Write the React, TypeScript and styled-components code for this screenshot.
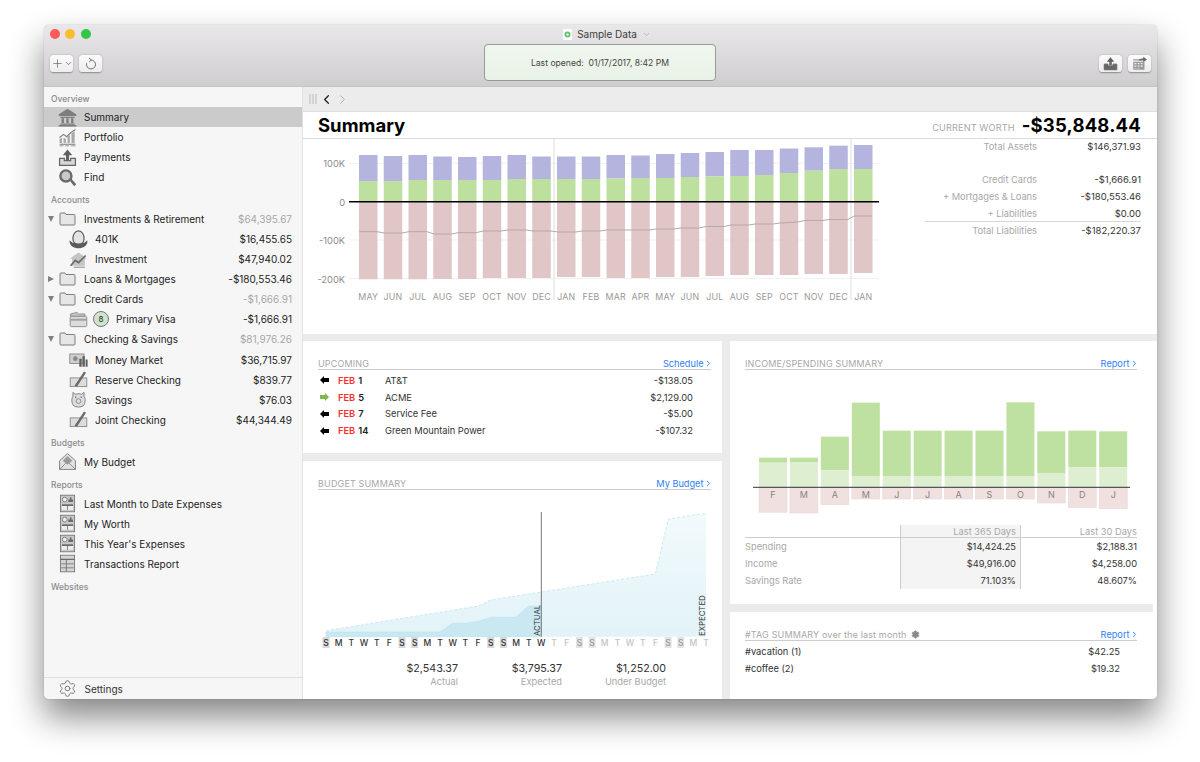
import { ReactNode } from 'react'
import styled, { createGlobalStyle } from 'styled-components'
import { ChevronDown, ChevronLeft, ChevronRight, Plus, Settings } from 'lucide-react'

const GlobalStyle = createGlobalStyle`
    html, body {
        margin: 0;
        height: 100%;
        overflow: hidden;
        background: #fff;
    }
    body {
        font-family: Inter, "Liberation Sans", sans-serif;
        font-size: 10px;
        color: #222;
        -webkit-font-smoothing: antialiased;
    }
    svg text {
        font-family: Inter, "Liberation Sans", sans-serif;
    }
`

const Page = styled.div`
    padding: 25px 43px 0 44px;
`

const Window = styled.div`
    width: 1113px;
    height: 674px;
    display: flex;
    flex-direction: column;
    border-radius: 5px;
    overflow: hidden;
    background: #fff;
    box-shadow: 0 0 1px rgba(0, 0, 0, 0.45), 0 18px 34px rgba(0, 0, 0, 0.48);
`

const TitleBar = styled.header`
    height: 62px;
    flex: none;
    display: flex;
    flex-direction: column;
    background: linear-gradient(#e9e7e9, #cfcdcf);
    border-bottom: 1px solid #c4c4c4;
    box-sizing: border-box;
`

const TitleRow = styled.div`
    height: 18px;
    flex: none;
    display: grid;
    grid-template-columns: 1fr auto 1fr;
    align-items: center;
    padding: 0 5.5px;
`

const Lights = styled.div`
    display: flex;
    gap: 5.5px;
`

const Light = styled.span<{ $color: string }>`
    width: 10px;
    height: 10px;
    border-radius: 50%;
    background: ${(p) => p.$color};
`

const DocTitle = styled.div`
    display: flex;
    align-items: center;
    gap: 5px;
    color: #3c3c3c;
    font-size: 10px;
    margin-left: 13px;
`

const ToolRow = styled.div`
    display: grid;
    grid-template-columns: 1fr 232px 1fr;
    padding: 1px 7px 0 6px;
    height: 37px;
    align-items: center;
`

const ToolGroup = styled.div<{ $end?: boolean }>`
    display: flex;
    gap: 6px;
    justify-content: ${(p) => (p.$end ? 'flex-end' : 'flex-start')};
    margin: 2px ${(p) => (p.$end ? -1 : 0)}px 0 0;
`

const ToolButton = styled.div`
    width: 23px;
    height: 17px;
    display: flex;
    align-items: center;
    justify-content: center;
    border-radius: 3.5px;
    background: linear-gradient(#fbfbfb, #eeeeee);
    box-shadow: 0 0.5px 1.5px rgba(0, 0, 0, 0.35);
    color: #666;
`

const StatusBox = styled.div`
    height: 37px;
    display: flex;
    align-items: center;
    justify-content: center;
    box-sizing: border-box;
    border: 1px solid #969b95;
    border-radius: 4px;
    background: linear-gradient(#f1f7ef, #e9f2e6);
    color: #444;
    font-size: 8.6px;
    white-space: pre;
`

const Body = styled.div`
    flex: 1;
    min-height: 0;
    display: flex;
`

const Sidebar = styled.aside`
    width: 259px;
    flex: none;
    display: flex;
    flex-direction: column;
    box-sizing: border-box;
    background: #f6f6f6;
    border-right: 1px solid #e2e2e2;
`

const SideList = styled.div`
    flex: 1;
`

const SectionLabel = styled.div<{ $first?: boolean }>`
    height: ${(p) => (p.$first ? 20 : 22)}px;
    box-sizing: border-box;
    padding: ${(p) => (p.$first ? 7 : 8)}px 0 0 7px;
    color: #8b8b8b;
    font-size: 8.5px;
    font-weight: 500;
`

const Row = styled.div<{ $indent: number; $active?: boolean }>`
    height: 20.05px;
    display: flex;
    align-items: center;
    padding: 0 10px 0 ${(p) => p.$indent}px;
    background: ${(p) => (p.$active ? '#cbcbcb' : 'transparent')};
    white-space: nowrap;
`

const Caret = styled.span<{ $open: boolean }>`
    width: 11px;
    flex: none;
    display: flex;
    &::before {
        content: '';
        border-style: solid;
        border-color: transparent;
        ${(p) =>
            p.$open
                ? 'border-width: 6px 3.5px 0; border-top-color: #808080;'
                : 'border-width: 3.5px 0 3.5px 6px; border-left-color: #808080;'}
    }
`

const IconSlot = styled.span<{ $width?: number }>`
    width: ${(p) => p.$width ?? 26}px;
    flex: none;
    display: flex;
    align-items: center;
`

const Amount = styled.span<{ $muted?: boolean }>`
    margin-left: auto;
    color: ${(p) => (p.$muted ? '#a6a6a6' : '#222')};
`

const Badge = styled.span`
    width: 14px;
    height: 14px;
    margin-right: 7px;
    flex: none;
    display: flex;
    align-items: center;
    justify-content: center;
    border: 1px solid #777;
    border-radius: 50%;
    background: #cfe3cf;
    font-size: 8px;
`

const SettingsRow = styled.div`
    height: 22px;
    flex: none;
    box-sizing: border-box;
    display: flex;
    align-items: center;
    gap: 8px;
    padding-left: 13.5px;
    border-top: 1px solid #dfdfdf;
    color: #6c6c6c;
    span {
        color: #333;
    }
`

const Main = styled.main`
    flex: 1;
    min-width: 0;
    display: flex;
    flex-direction: column;
`

const NavStrip = styled.div`
    height: 25px;
    flex: none;
    box-sizing: border-box;
    display: flex;
    align-items: center;
    gap: 1px;
    padding-left: 6px;
    background: #ececec;
    border-bottom: 1px solid #dedede;
`

const HeaderBar = styled.div`
    height: 27px;
    flex: none;
    box-sizing: border-box;
    display: flex;
    align-items: center;
    padding: 0 16px 0 15px;
    border-bottom: 1px solid #dcdcdc;
`

const PageTitle = styled.h1`
    margin: 0 auto 0 0;
    font-size: 18.5px;
    font-weight: 700;
    color: #000;
`

const WorthLabel = styled.span`
    margin: 4px 7px 0 0;
    font-size: 9.2px;
    letter-spacing: 0.1px;
    color: #a8a8a8;
`

const WorthValue = styled.span`
    font-size: 18.5px;
    font-weight: 700;
    color: #000;
    letter-spacing: 0.2px;
`

const ChartPanel = styled.section`
    height: 195px;
    flex: none;
    display: flex;
`

const ChartSvg = styled.svg`
    display: block;
    flex: none;
`

const Totals = styled.div`
    flex: 1;
    padding: 0 16px 0 9px;
    font-size: 9.5px;
`

const TotalRow = styled.div<{ $gap?: number; $rule?: boolean }>`
    display: grid;
    grid-template-columns: 112px 1fr;
    height: ${(p) => (p.$gap === undefined ? 17 : 15)}px;
    align-items: center;
    margin-bottom: ${(p) => p.$gap ?? 0}px;
    border-bottom: ${(p) => (p.$rule ? '1px solid #d8d8d8' : 'none')};
    box-sizing: border-box;
    span:first-child {
        text-align: right;
        color: #a8a8a8;
        font-size: 9.3px;
    }
    span:last-child {
        text-align: right;
        color: #333;
    }
`

const Dashboard = styled.div`
    flex: 1;
    min-height: 0;
    display: grid;
    grid-template-columns: 419px 1fr;
    column-gap: 8px;
    padding-top: 7px;
    background: #ebebeb;
    font-size: 9.3px;
`

const Column = styled.div<{ $rows: string; $inset?: boolean }>`
    display: grid;
    grid-template-rows: ${(p) => p.$rows};
    row-gap: 8px;
    min-height: 0;
    min-width: 0;
    border-right: ${(p) => (p.$inset ? '4px solid #fff' : 'none')};
`

const Panel = styled.section<{ $right?: number }>`
    background: #fff;
    padding: 17px ${(p) => p.$right ?? 11}px 0 15px;
    min-height: 0;
    min-width: 0;
`

const PanelHeader = styled.div<{ $tight?: boolean }>`
    height: 12px;
    box-sizing: border-box;
    display: flex;
    justify-content: space-between;
    align-items: center;
    border-bottom: 1px solid #cdcdcd;
    margin-bottom: ${(p) => (p.$tight ? 0 : 2)}px;
`

const PanelTitle = styled.span`
    font-size: 9px;
    letter-spacing: 0.15px;
    color: #a8a8a8;
    display: flex;
    align-items: center;
    gap: 4px;
    white-space: pre;
`

const PanelLink = styled.span`
    font-size: 9.2px;
    color: #2e7ff5;
    display: flex;
    align-items: center;
    gap: 0;
    margin-right: -1.5px;
`

const UpcomingRow = styled.div`
    height: 16.8px;
    display: grid;
    grid-template-columns: 20px 47px 1fr 90px 18px;
    align-items: center;
    color: #333;
    > svg {
        margin-left: 2px;
    }
`

const DateCell = styled.span`
    font-weight: 600;
    color: #222;
    b {
        color: #fb2d2d;
        font-weight: 600;
        margin-right: 3px;
    }
`

const AmountCell = styled.span`
    text-align: right;
`

const BudgetStats = styled.div`
    display: grid;
    grid-template-columns: repeat(3, 104px);
    padding-left: 36px;
    margin-top: 9px;
`

const Stat = styled.div`
    text-align: right;
    strong {
        display: block;
        font-size: 10.7px;
        line-height: 15px;
        font-weight: 400;
        color: #333;
    }
    span {
        display: block;
        line-height: 12px;
        color: #a8a8a8;
    }
`

const IncomeTable = styled.div`
    display: grid;
    grid-template-columns: 155px 121px 1fr;
    margin-top: 5px;
`

const Cell = styled.div<{ $head?: boolean; $band?: boolean; $label?: boolean }>`
    height: ${(p) => (p.$head ? 13 : 17)}px;
    line-height: ${(p) => (p.$head ? 13 : 17)}px;
    box-sizing: border-box;
    text-align: ${(p) => (p.$label ? 'left' : 'right')};
    color: ${(p) => (p.$head || p.$label ? '#a8a8a8' : '#333')};
    padding-right: ${(p) => (p.$band ? 4 : 0)}px;
    background: ${(p) => (p.$band ? '#f4f4f4' : 'transparent')};
    border-left: ${(p) => (p.$band ? '1px solid #ccc' : 'none')};
    border-right: ${(p) => (p.$band ? '1px solid #ccc' : 'none')};
    border-bottom: ${(p) => (p.$head ? '1px solid #cdcdcd' : 'none')};
`

const TagRow = styled.div`
    height: 17px;
    display: flex;
    justify-content: space-between;
    align-items: center;
    padding-right: 17px;
    color: #333;
`

const GRAY = '#7d7d7d'

const Glyph = ({ size = 19, children }: { size?: number; children: ReactNode }) => (
    <svg width={size} height={size} viewBox="0 0 24 24" fill={GRAY} stroke="none">
        {children}
    </svg>
)

const BankIcon = () => (
    <Glyph>
        <path d="M12 1 23 8v2H1V8z" />
        <path d="M3 11h18v1.5H3z" />
        <path d="M4.5 13h3v6h-3zM10.500 13h3v6h-3zM16.500 13h3v6h-3z" />
        <path d="M3 19.500h18V21H3zM1 21.500h22V23.500H1z" />
    </Glyph>
)

const PortfolioIcon = () => (
    <Glyph>
        <path d="M2 19V14l3-2v7zM7 19v-7l3 2v5zM12 19v-8l3-2v10zM17 19V7l4-3v15z" fill="#a8a8a8" />
        <path d="M2 12l5-4 4 3 5-5 6-4" fill="none" stroke={GRAY} strokeWidth="1.4" />
        <path d="M2 20h20v1H2zM2 22h5v1H2zM9 22h5v1H9zM16 22h6v1h-6z" />
    </Glyph>
)

const TrayIcon = ({ size = 19, fill = '#d8d8d8' }: { size?: number; fill?: string }) => (
    <Glyph size={size}>
        <path d="M12 2 18 9h-4v6h-4V9H6z" fill="#5f5f5f" />
        <path d="M2 13h6v3h8v-3h6v9H2z" fill={fill} stroke="#666" strokeWidth="1.6" />
    </Glyph>
)

const FindIcon = () => (
    <Glyph>
        <circle cx="10" cy="10" r="7" fill="#c9c9c9" stroke="#6a6a6a" strokeWidth="3" />
        <path d="M15 16l2-2 6 6.500-2.500 2.500z" fill="#666" />
    </Glyph>
)

const FolderIcon = () => (
    <svg width="17" height="14" viewBox="0 0 17 14">
        <path
            d="M1 3V2a1 1 0 0 1 1-1h4l1 1.500h8a1 1 0 0 1 1 1V12a1 1 0 0 1-1 1H2a1 1 0 0 1-1-1z"
            fill="#e6e6e6"
            stroke={GRAY}
        />
    </svg>
)

const EggIcon = () => (
    <Glyph>
        <path d="M12 1c4.500 0 7 5 7 10s-3.500 7-7 7-7-2-7-7 2.500-10 7-10z" fill="#e4e4e4" stroke="#5f5f5f" strokeWidth="1.6" />
        <path d="M1 13c1.500 2 3 3 5 3.500 4 1.500 8 1.500 12 0 2-.5 3.500-1.500 5-3.500 1.500 5.500-4.500 10-11 10S-.5 18.500 1 13z" fill="#5a5a5a" />
    </Glyph>
)

const HouseChartIcon = () => (
    <Glyph>
        <path d="M12 3 23 11h-3v9H4v-9H1z" fill="#c4c4c4" />
        <path d="M2 20l6-7 4 3 9-9" fill="none" stroke="#666" strokeWidth="2" />
        <path d="M6 21h14v1.500H6z" fill="#999" />
    </Glyph>
)

const CardsIcon = () => (
    <Glyph>
        <path d="M2 8V5l8-2 2 2h8v3z" fill="#c6c6c6" stroke={GRAY} />
        <rect x="1.500" y="8" width="21" height="13" rx="1.500" fill="#dcdcdc" stroke={GRAY} />
        <path d="M2 11h20v2.500H2z" fill="#a0a0a0" />
    </Glyph>
)

const MoneyIcon = () => (
    <Glyph>
        <rect x="1" y="5" width="18" height="12" fill="#cfcfcf" stroke={GRAY} />
        <circle cx="8" cy="11" r="3" fill="#8a8a8a" />
        <path d="M13 11h3v10h-3zM17 8h3v13h-3zM21 12h2.500v9H21z" fill="#5f5f5f" />
    </Glyph>
)

const CheckIcon = () => (
    <Glyph>
        <rect x="1.500" y="10" width="21" height="11" fill="#dcdcdc" stroke={GRAY} />
        <path d="M7 20 19 2l2.500 1.500L10 21z" fill="#6a6a6a" />
    </Glyph>
)

const PiggyIcon = () => (
    <Glyph>
        <path d="M5 3l3 2.500c3-1 6-1 8 0L19 3v5c2 2 2 9-1 12-3 2-9 2-12 0-3-3-3-10-1-12z" fill="#dcdcdc" stroke={GRAY} strokeWidth="1.2" />
        <circle cx="12" cy="14" r="3" fill="none" stroke={GRAY} />
        <circle cx="8.500" cy="9" r="1" />
        <circle cx="15.500" cy="9" r="1" />
    </Glyph>
)

const EnvelopeIcon = () => (
    <Glyph>
        <path d="M2 11 12 2l10 9v11H2z" fill="#e2e2e2" stroke={GRAY} strokeWidth="1.200" />
        <path d="M6 11l6-6 6 6-6 5z" fill="#9a9a9a" />
        <path d="M2 22l8-8M22 22l-8-8" stroke={GRAY} fill="none" />
    </Glyph>
)

const ReportIcon = () => (
    <Glyph>
        <rect x="3" y="1.500" width="18" height="21" fill="#c8c8c8" stroke="#6a6a6a" />
        <circle cx="8.500" cy="7" r="3" fill="#eee" stroke="#6a6a6a" />
        <path d="M13 10V7h2V4h2v3h2v3z" fill="#6a6a6a" />
        <path d="M5 13h14v7H5z" fill="#eee" />
        <path d="M5 13h14v2H5zM11.500 15h1v5h-1z" fill="#6a6a6a" />
    </Glyph>
)

const TableIcon = () => (
    <Glyph>
        <rect x="3" y="1.500" width="18" height="21" fill="#d4d4d4" stroke="#6a6a6a" />
        <path d="M3 6h18v1.500H3zM10 7h1v15h-1zM4 12h16v1H4zM4 17h16v1H4z" fill="#6a6a6a" />
    </Glyph>
)

const LeftArrow = () => (
    <svg width="9" height="8" viewBox="0 0 9 8">
        <path d="M0 4 4 0v2h5v4H4v2z" fill="#000" />
    </svg>
)

const RightArrow = () => (
    <svg width="9" height="8" viewBox="0 0 9 8">
        <path d="M9 4 5 0v2H0v4h5v2z" fill="#7db84c" />
    </svg>
)

const RefreshIcon = () => (
    <svg width="12" height="13" viewBox="0 0 12 13" fill="none" stroke="#707070" strokeWidth="1">
        <path d="M6 3a4.500 4.500 0 1 1-4.300 3.200" />
        <path d="M4 0.800 6.300 3 4 5.200" />
    </svg>
)

const ExportIcon = () => (
    <Glyph size={15}>
        <path d="M2 5h12v2H2zM2 9h18v13H2z" fill="#9a9a9a" />
        <path d="M4 11h3v2H4zM9 11h3v2H9zM14 11h3v2h-3zM4 15h3v2H4zM9 15h3v2H9zM14 15h3v2h-3zM4 19h3v1H4zM9 19h3v1H9z" fill="#eee" />
        <path d="M10 7c3-3 6-3 8-3V1l6 4.500-6 4.500V7c-3 0-5 0-8 0z" fill="#666" />
    </Glyph>
)

const DocIcon = () => (
    <svg width="9" height="11" viewBox="0 0 9 11">
        <rect width="9" height="11" fill="#fdfdfd" />
        <circle cx="4.500" cy="5.500" r="3" fill="#5fc46a" />
        <circle cx="4.500" cy="5.500" r="1.200" fill="#e8f8e8" />
    </svg>
)

const GripIcon = () => (
    <svg width="9" height="10" viewBox="0 0 9 10" stroke="#bbb">
        <path d="M1 0v10M4 0v10M7 0v10" />
    </svg>
)

type BarRow = [string, number, number, number]

const WORTH: BarRow[] = [
    ['MAY', 155, 181, 279.3],
    ['JUN', 156, 181, 279.3],
    ['JUL', 155, 180, 279.3],
    ['AUG', 156.5, 180, 279],
    ['SEP', 157, 180, 279],
    ['OCT', 156, 180, 278],
    ['NOV', 155, 179, 278],
    ['DEC', 156.5, 179, 278],
    ['JAN', 156.5, 179, 277],
    ['FEB', 156.5, 179, 277],
    ['MAR', 155, 178.5, 278],
    ['APR', 155.5, 178, 278],
    ['MAY', 154, 178, 277],
    ['JUN', 153, 177, 277],
    ['JUL', 152, 176.5, 276],
    ['AUG', 150, 176, 275],
    ['SEP', 150, 175, 275],
    ['OCT', 148.5, 173, 275],
    ['NOV', 147.3, 170.7, 274],
    ['DEC', 145.7, 169, 274],
    ['JAN', 145, 169, 273],
]

const WORTH_LINE = [
    [359, 231.7], [377, 231.7], [384, 233], [402, 233], [409, 231.7], [427, 231.7], [434, 234], [452, 234],
    [458, 232.7], [476, 232.7], [483, 231], [501, 231], [508, 230], [526, 230], [533, 231], [551, 231],
    [558, 232], [576, 232], [582, 231], [600, 231], [607, 230], [625, 230], [632, 230], [650, 230],
    [656, 229], [674, 229], [681, 228], [699, 228], [706, 226.500], [724, 226.500], [731, 225], [749, 225],
    [755, 224], [773, 224], [780, 223], [798, 222], [805, 220.500], [823, 220.500], [829, 219.500], [848, 219.500],
    [854, 216], [872, 216],
]

const WorthChart = () => (
    <ChartSvg width={613} height={195} viewBox="303 139 613 195">
        {[163.5, 240, 278.5].map((y) => (
            <line key={y} x1={349} x2={879} y1={y} y2={y} stroke="#f1f1f1" />
        ))}
        {[
            ['100K', 167],
            ['0', 205.500],
            ['-100K', 244],
            ['-200K', 282.500],
        ].map(([label, y]) => (
            <text key={label} x={345} y={y} textAnchor="end" fontSize={9.3} fill="#8c8c8c">
                {label}
            </text>
        ))}
        {[554, 851].map((x) => (
            <line key={x} x1={x} x2={x} y1={139} y2={300} stroke="#dedede" />
        ))}
        {WORTH.map(([month, top, mid, bottom], i) => {
            const x = 359 + i * 24.75
            return (
                <g key={i}>
                    <rect x={x} y={top} width={18.5} height={mid - top} fill="#b4b4de" />
                    <rect x={x} y={mid} width={18.5} height={201.700 - mid} fill="#bde09f" />
                    <rect x={x} y={201.700} width={18.5} height={bottom - 201.700} fill="#e0c6c6" />
                    <text x={x + 9.25} y={299.500} textAnchor="middle" fontSize={8.8} letterSpacing={0.2} fill="#999">
                        {month}
                    </text>
                </g>
            )
        })}
        <polyline points={WORTH_LINE.map((p) => p.join(',')).join(' ')} fill="none" stroke="#b5a8a8" />
        <line x1={349} x2={879} y1={201.700} y2={201.700} stroke="#000" strokeWidth={1.6} />
    </ChartSvg>
)

const DAYS = 'SMTWTFSSMTWTFSSMTWTFSSMTWTFSSMT'.split('')

const BudgetChart = () => (
    <ChartSvg width={393} height={162} viewBox="318 490 393 162">
        <defs>
            <linearGradient id="expectedFill" x1="0" y1="0" x2="0" y2="1">
                <stop offset="0" stopColor="#f2fafc" />
                <stop offset="1" stopColor="#e2f3f8" />
            </linearGradient>
        </defs>
        <path d="M326 630.700 478.300 606 490.700 600 655.300 574 668.300 519.300 706 513.300V636.700H326Z" fill="url(#expectedFill)" />
        <path
            d="M326 630.700 478.300 606 490.700 600 655.300 574 668.300 519.300 706 513.300"
            fill="none"
            stroke="#cde9f3"
            strokeDasharray="3 2"
        />
        <path
            d="M326 632H440L452.300 623.300H465.700L478 621.300 490.700 617.300H515.700L528.700 606H541.300V636.700H326Z"
            fill="#c9e8f2"
            stroke="#b6e0ee"
            strokeWidth={0.5}
        />
        <line x1={541.300} x2={541.300} y1={512} y2={636.700} stroke="#777" />
        <text transform="translate(539.500 636) rotate(-90)" fontSize={7.8} fill="#333">
            ACTUAL
        </text>
        <text transform="translate(704.500 636) rotate(-90)" fontSize={7.8} fill="#333">
            EXPECTED
        </text>
        {DAYS.map((d, i) => {
            const x = 326 + i * 12.67
            const weekend = d === 'S'
            return (
                <g key={i}>
                    {weekend && <rect x={x - 3.5} y={637} width={7} height={11} fill={i < 18 ? '#d8d8d8' : '#e4e4e4'} />}
                    <text
                        x={x}
                        y={645.500}
                        textAnchor="middle"
                        fontSize={8.5}
                        fontWeight={500}
                        fill={i < 18 ? '#333' : weekend ? '#999' : '#c4c4c4'}
                    >
                        {d}
                    </text>
                </g>
            )
        })}
    </ChartSvg>
)

const INCOME: [string, number, number, number][] = [
    ['F', 338, 353, 502],
    ['M', 338, 351, 504],
    ['A', 275, 376, 479],
    ['M', 173, 393, 462],
    ['J', 257, 393, 462],
    ['J', 257, 393, 462],
    ['A', 257, 393, 462],
    ['S', 257, 393, 462],
    ['O', 172, 393, 462],
    ['N', 259, 384, 474],
    ['D', 257, 367, 488],
    ['J', 259, 367, 491],
]

const IncomeChart = () => (
    <ChartSvg width={392} height={150} viewBox="745 370 392 150">
        {INCOME.map(([label, top, light, bottom], i) => {
            const x = 759 + i * 30.93
            const y = (z: number) => 345 + z / 3
            return (
                <g key={i}>
                    <rect x={x} y={y(top)} width={28} height={y(light) - y(top)} fill="#bee0a0" />
                    <rect x={x} y={y(light)} width={28} height={y(427) - y(light)} fill="#deeed0" />
                    <rect x={x} y={y(427)} width={28} height={y(bottom) - y(427)} fill="#f0e0e0" stroke="#e8d4d4" strokeWidth={0.5} />
                    <text x={x + 14} y={498} textAnchor="middle" fontSize={9} fill="#8a8080">
                        {label}
                    </text>
                </g>
            )
        })}
        <line x1={753} x2={1130} y1={487.300} y2={487.300} stroke="#333" />
    </ChartSvg>
)

const MoreLink = ({ label }: { label: string }) => (
    <PanelLink>
        {label}
        <ChevronRight size={9} strokeWidth={2.5} />
    </PanelLink>
)

const UPCOMING = [
    { out: true, day: 'FEB', num: '1', name: 'AT&T', amount: '-$138.05' },
    { out: false, day: 'FEB', num: '5', name: 'ACME', amount: '$2,129.00' },
    { out: true, day: 'FEB', num: '7', name: 'Service Fee', amount: '-$5.00' },
    { out: true, day: 'FEB', num: '14', name: 'Green Mountain Power', amount: '-$107.32' },
]

export default function App() {
    return (
        <Page>
            <GlobalStyle />
            <Window>
                <TitleBar>
                    <TitleRow>
                        <Lights>
                            <Light $color="#fc5b57" />
                            <Light $color="#fdbb2e" />
                            <Light $color="#33c748" />
                        </Lights>
                        <DocTitle>
                            <DocIcon />
                            Sample Data
                            <ChevronDown size={9} color="#aaa" />
                        </DocTitle>
                    </TitleRow>
                    <ToolRow>
                        <ToolGroup>
                            <ToolButton>
                                <Plus size={13} strokeWidth={1.3} />
                                <ChevronDown size={9} strokeWidth={2} />
                            </ToolButton>
                            <ToolButton>
                                <RefreshIcon />
                            </ToolButton>
                        </ToolGroup>
                        <StatusBox>Last opened:  01/17/2017, 8:42 PM</StatusBox>
                        <ToolGroup $end>
                            <ToolButton>
                                <TrayIcon size={15} fill="#666" />
                            </ToolButton>
                            <ToolButton>
                                <ExportIcon />
                            </ToolButton>
                        </ToolGroup>
                    </ToolRow>
                </TitleBar>
                <Body>
                    <Sidebar>
                        <SideList>
                            <SectionLabel $first>Overview</SectionLabel>
                            <Row $indent={14} $active>
                                <IconSlot><BankIcon /></IconSlot>
                                Summary
                            </Row>
                            <Row $indent={14}>
                                <IconSlot><PortfolioIcon /></IconSlot>
                                Portfolio
                            </Row>
                            <Row $indent={14}>
                                <IconSlot><TrayIcon /></IconSlot>
                                Payments
                            </Row>
                            <Row $indent={14}>
                                <IconSlot><FindIcon /></IconSlot>
                                Find
                            </Row>
                            <SectionLabel>Accounts</SectionLabel>
                            <Row $indent={4}>
                                <Caret $open />
                                <IconSlot $width={25}><FolderIcon /></IconSlot>
                                Investments &amp; Retirement
                                <Amount $muted>$64,395.67</Amount>
                            </Row>
                            <Row $indent={25}>
                                <IconSlot><EggIcon /></IconSlot>
                                401K
                                <Amount>$16,455.65</Amount>
                            </Row>
                            <Row $indent={25}>
                                <IconSlot><HouseChartIcon /></IconSlot>
                                Investment
                                <Amount>$47,940.02</Amount>
                            </Row>
                            <Row $indent={4}>
                                <Caret $open={false} />
                                <IconSlot $width={25}><FolderIcon /></IconSlot>
                                Loans &amp; Mortgages
                                <Amount>-$180,553.46</Amount>
                            </Row>
                            <Row $indent={4}>
                                <Caret $open />
                                <IconSlot $width={25}><FolderIcon /></IconSlot>
                                Credit Cards
                                <Amount $muted>-$1,666.91</Amount>
                            </Row>
                            <Row $indent={25}>
                                <IconSlot $width={24}><CardsIcon /></IconSlot>
                                <Badge>8</Badge>
                                Primary Visa
                                <Amount>-$1,666.91</Amount>
                            </Row>
                            <Row $indent={4}>
                                <Caret $open />
                                <IconSlot $width={25}><FolderIcon /></IconSlot>
                                Checking &amp; Savings
                                <Amount $muted>$81,976.26</Amount>
                            </Row>
                            <Row $indent={25}>
                                <IconSlot><MoneyIcon /></IconSlot>
                                Money Market
                                <Amount>$36,715.97</Amount>
                            </Row>
                            <Row $indent={25}>
                                <IconSlot><CheckIcon /></IconSlot>
                                Reserve Checking
                                <Amount>$839.77</Amount>
                            </Row>
                            <Row $indent={25}>
                                <IconSlot><PiggyIcon /></IconSlot>
                                Savings
                                <Amount>$76.03</Amount>
                            </Row>
                            <Row $indent={25}>
                                <IconSlot><CheckIcon /></IconSlot>
                                Joint Checking
                                <Amount>$44,344.49</Amount>
                            </Row>
                            <SectionLabel>Budgets</SectionLabel>
                            <Row $indent={14}>
                                <IconSlot><EnvelopeIcon /></IconSlot>
                                My Budget
                            </Row>
                            <SectionLabel>Reports</SectionLabel>
                            <Row $indent={14}>
                                <IconSlot><ReportIcon /></IconSlot>
                                Last Month to Date Expenses
                            </Row>
                            <Row $indent={14}>
                                <IconSlot><ReportIcon /></IconSlot>
                                My Worth
                            </Row>
                            <Row $indent={14}>
                                <IconSlot><ReportIcon /></IconSlot>
                                This Year's Expenses
                            </Row>
                            <Row $indent={14}>
                                <IconSlot><TableIcon /></IconSlot>
                                Transactions Report
                            </Row>
                            <SectionLabel>Websites</SectionLabel>
                        </SideList>
                        <SettingsRow>
                            <Settings size={19} strokeWidth={1.1} />
                            <span>Settings</span>
                        </SettingsRow>
                    </Sidebar>
                    <Main>
                        <NavStrip>
                            <GripIcon />
                            <ChevronLeft size={15} color="#222" strokeWidth={2} />
                            <ChevronRight size={15} color="#aaa" strokeWidth={1.5} />
                        </NavStrip>
                        <HeaderBar>
                            <PageTitle>Summary</PageTitle>
                            <WorthLabel>CURRENT WORTH</WorthLabel>
                            <WorthValue>-$35,848.44</WorthValue>
                        </HeaderBar>
                        <ChartPanel>
                            <WorthChart />
                            <Totals>
                                <TotalRow $gap={17}>
                                    <span>Total Assets</span>
                                    <span>$146,371.93</span>
                                </TotalRow>
                                <TotalRow>
                                    <span>Credit Cards</span>
                                    <span>-$1,666.91</span>
                                </TotalRow>
                                <TotalRow>
                                    <span>+ Mortgages &amp; Loans</span>
                                    <span>-$180,553.46</span>
                                </TotalRow>
                                <TotalRow $rule>
                                    <span>+ Liabilities</span>
                                    <span>$0.00</span>
                                </TotalRow>
                                <TotalRow>
                                    <span>Total Liabilities</span>
                                    <span>-$182,220.37</span>
                                </TotalRow>
                            </Totals>
                        </ChartPanel>
                        <Dashboard>
                            <Column $rows="112px 1fr">
                                <Panel>
                                    <PanelHeader>
                                        <PanelTitle>UPCOMING</PanelTitle>
                                        <MoreLink label="Schedule" />
                                    </PanelHeader>
                                    {UPCOMING.map((u) => (
                                        <UpcomingRow key={u.name}>
                                            {u.out ? <LeftArrow /> : <RightArrow />}
                                            <DateCell>
                                                <b>{u.day}</b>
                                                {u.num}
                                            </DateCell>
                                            <span>{u.name}</span>
                                            <AmountCell>{u.amount}</AmountCell>
                                        </UpcomingRow>
                                    ))}
                                </Panel>
                                <Panel>
                                    <PanelHeader $tight>
                                        <PanelTitle>BUDGET SUMMARY</PanelTitle>
                                        <MoreLink label="My Budget" />
                                    </PanelHeader>
                                    <BudgetChart />
                                    <BudgetStats>
                                        <Stat>
                                            <strong>$2,543.37</strong>
                                            <span>Actual</span>
                                        </Stat>
                                        <Stat>
                                            <strong>$3,795.37</strong>
                                            <span>Expected</span>
                                        </Stat>
                                        <Stat>
                                            <strong>$1,252.00</strong>
                                            <span>Under Budget</span>
                                        </Stat>
                                    </BudgetStats>
                                </Panel>
                            </Column>
                            <Column $rows="263px 1fr" $inset>
                                <Panel $right={16}>
                                    <PanelHeader $tight>
                                        <PanelTitle>INCOME/SPENDING SUMMARY</PanelTitle>
                                        <MoreLink label="Report" />
                                    </PanelHeader>
                                    <IncomeChart />
                                    <IncomeTable>
                                        <Cell $head />
                                        <Cell $head $band>Last 365 Days</Cell>
                                        <Cell $head>Last 30 Days</Cell>
                                        <Cell $label>Spending</Cell>
                                        <Cell $band>$14,424.25</Cell>
                                        <Cell>$2,188.31</Cell>
                                        <Cell $label>Income</Cell>
                                        <Cell $band>$49,916.00</Cell>
                                        <Cell>$4,258.00</Cell>
                                        <Cell $label>Savings Rate</Cell>
                                        <Cell $band>71.103%</Cell>
                                        <Cell>48.607%</Cell>
                                    </IncomeTable>
                                </Panel>
                                <Panel $right={16}>
                                    <PanelHeader>
                                        <PanelTitle>
                                            #TAG SUMMARY over the last month
                                            <Settings size={9} color="#888" fill="#888" strokeWidth={2} />
                                        </PanelTitle>
                                        <MoreLink label="Report" />
                                    </PanelHeader>
                                    <TagRow>
                                        <span>#vacation (1)</span>
                                        <span>$42.25</span>
                                    </TagRow>
                                    <TagRow>
                                        <span>#coffee (2)</span>
                                        <span>$19.32</span>
                                    </TagRow>
                                </Panel>
                            </Column>
                        </Dashboard>
                    </Main>
                </Body>
            </Window>
        </Page>
    )
}
